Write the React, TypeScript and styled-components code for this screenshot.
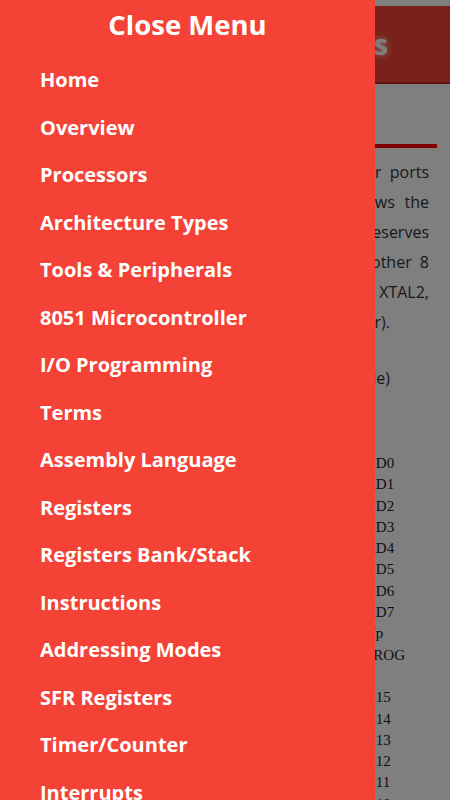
import React from "react";
import styled, { createGlobalStyle } from "styled-components";

const GlobalStyle = createGlobalStyle`
  html, body {
    margin: 0;
    padding: 0;
    background: #ffffff;
    font-family: "Open Sans", "Liberation Sans", sans-serif;
    overflow: hidden;
  }
  * { box-sizing: border-box; }
`;

const Page = styled.div`
  width: 450px;
  min-height: 800px;
  padding-top: 6px;
  background: #ffffff;
`;

const Header = styled.header`
  height: 78px;
  background: #f44336;
  border-bottom: 2px solid #c62828;
  display: flex;
  align-items: center;
  justify-content: flex-end;
  padding-right: 62px;
`;

const HeaderTitle = styled.h1`
  margin: 0;
  font-size: 28px;
  font-weight: 700;
  color: #ffffff;
  white-space: nowrap;
  text-shadow: 0 0 6px rgba(255, 255, 255, 0.9);
`;

const Content = styled.main`
  padding: 0 21px 0 20px;
`;

const SectionTitle = styled.h2`
  margin: 0;
  padding-top: 26px;
  font-size: 22px;
  line-height: 34px;
  font-weight: 700;
  color: #f44336;
  border-bottom: 4px solid #ff0000;
  margin-right: -8px;
`;

const Paragraph = styled.p`
  margin: 9px 0 0;
  font-size: 16px;
  line-height: 30px;
  color: #333333;
`;

const Line = styled.span<{ $last?: boolean; $inset?: number; $spread?: number }>`
  display: flex;
  justify-content: flex-end;
  white-space: nowrap;
  word-spacing: ${(p) => (p.$last ? 0 : p.$spread ?? 4)}px;
  padding-right: ${(p) => p.$inset ?? 0}px;
`;

const Caption = styled.p`
  margin: 26px 0 0;
  font-size: 16px;
  line-height: 30px;
  color: #333333;
  display: flex;
  justify-content: flex-end;
  white-space: nowrap;
  padding-right: 39px;
`;

const Diagram = styled.div`
  margin-top: 60px;
  display: flex;
  gap: 20px;
`;

const Chip = styled.div`
  width: 325px;
  flex: none;
  border: 1px solid #333;
`;

const PinLabels = styled.div`
  display: flex;
  flex-direction: column;
`;

const PinLabel = styled.span`
  display: block;
  height: 21.3px;
  line-height: 21.3px;
  font-family: "Liberation Serif", "Times New Roman", serif;
  font-size: 15px;
  color: #222222;
  white-space: nowrap;
`;

const Overlay = styled.div`
  position: fixed;
  inset: 0;
  background: rgba(0, 0, 0, 0.5);
`;

const Menu = styled.nav`
  position: fixed;
  top: 0;
  left: 0;
  width: 375px;
  height: 100vh;
  background: #f44336;
  overflow: hidden;
`;

const MenuTitle = styled.div`
  text-align: center;
  font-size: 27.5px;
  line-height: 50px;
  font-weight: 700;
  color: #ffffff;
`;

const MenuList = styled.ul`
  list-style: none;
  margin: 6px 0 0;
  padding: 0;
`;

const MenuItem = styled.li`
  padding: 10px 40px;
  font-size: 20px;
  line-height: 27.5px;
  font-weight: 700;
  color: #ffffff;
  white-space: nowrap;
`;

const menuItems = [
  "Home",
  "Overview",
  "Processors",
  "Architecture Types",
  "Tools & Peripherals",
  "8051 Microcontroller",
  "I/O Programming",
  "Terms",
  "Assembly Language",
  "Registers",
  "Registers Bank/Stack",
  "Instructions",
  "Addressing Modes",
  "SFR Registers",
  "Timer/Counter",
  "Interrupts",
];

const lines: { text: string; spread?: number }[] = [
  { text: "A total of 32 pins are set aside for the four ports" },
  { text: "P0, P1, P2 and P3. The following figure shows the", spread: 5.5 },
  { text: "pin configuration of the 8051. The 8051 also reserves" },
  { text: "two pins for Vcc and GND and uses another 8" },
  { text: "pins for RST, EA, ALE, PSEN, XTAL1 and XTAL2," },
];

const pins = [
  "AD0",
  "AD1",
  "AD2",
  "AD3",
  "AD4",
  "AD5",
  "AD6",
  "AD7",
  "Vp",
  "PROG",
  "",
  "A15",
  "A14",
  "A13",
  "A12",
  "A11",
  "A10",
  "A9",
  "A8",
];

export default function App() {
  return (
    <>
      <GlobalStyle />
      <Page>
        <Header>
          <HeaderTitle>8051 Microcontrollers</HeaderTitle>
        </Header>
        <Content>
          <SectionTitle>I/O Ports</SectionTitle>
          <Paragraph>
            {lines.map((l) => (
              <Line key={l.text} $spread={l.spread}>
                {l.text}
              </Line>
            ))}
            <Line $last $inset={39}>
              (reset, memory and the crystal oscillator).
            </Line>
          </Paragraph>
          <Caption>Pin Diagram of 8051 (40 pin DIP style)</Caption>
          <Diagram>
            <Chip />
            <PinLabels>
              {pins.map((p, i) => (
                <PinLabel key={i}>{p || "\u00a0"}</PinLabel>
              ))}
            </PinLabels>
          </Diagram>
        </Content>
      </Page>
      <Overlay />
      <Menu>
        <MenuTitle>Close Menu</MenuTitle>
        <MenuList>
          {menuItems.map((m) => (
            <MenuItem key={m}>{m}</MenuItem>
          ))}
        </MenuList>
      </Menu>
    </>
  );
}
